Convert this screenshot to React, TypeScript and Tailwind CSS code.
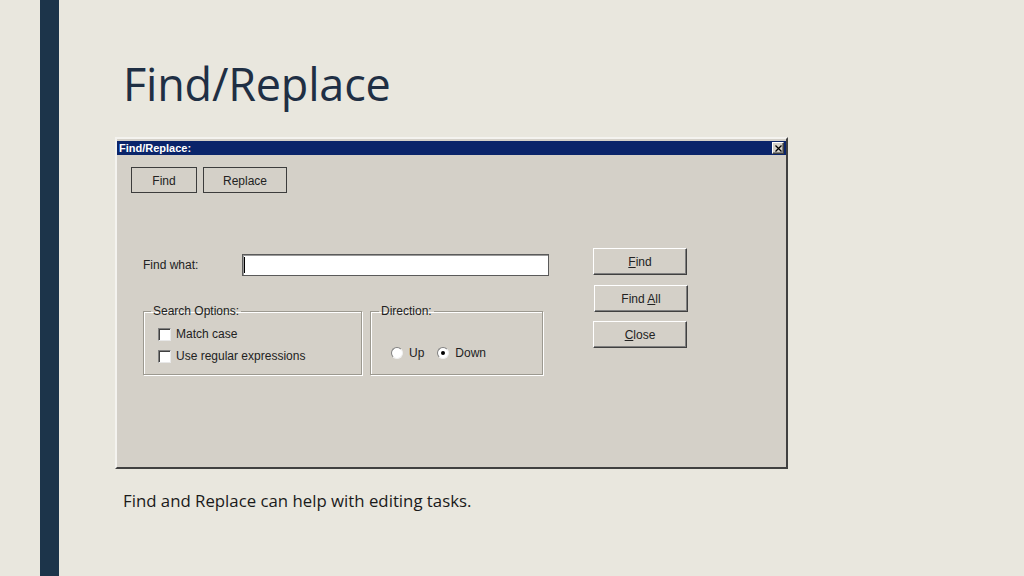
import React from "react";

const raised =
  "border border-t-[#ffffff] border-l-[#ffffff] border-r-[#404040] border-b-[#404040] shadow-[inset_-1px_-1px_0_#808080]";

function SideButton({ children, className = "" }: { children: React.ReactNode; className?: string }) {
  return (
    <div
      className={`w-[94px] h-[27px] bg-[#d4d0c8] ${raised} flex items-center justify-center text-[12px] text-[#222] ${className}`}
    >
      {children}
    </div>
  );
}

function Checkbox({ label, className = "" }: { label: string; className?: string }) {
  return (
    <div className={`flex items-center ${className}`}>
      <div className="w-[13px] h-[13px] bg-white border border-t-[#808080] border-l-[#808080] border-r-[#e8e8e8] border-b-[#e8e8e8] shadow-[inset_1px_1px_0_#404040]" />
      <span className="ml-[5px] text-[12px] text-[#222]">{label}</span>
    </div>
  );
}

function Radio({ checked }: { checked?: boolean }) {
  return (
    <div className="w-[12px] h-[12px] rounded-full bg-white border border-t-[#808080] border-l-[#808080] border-r-[#f0f0f0] border-b-[#f0f0f0] flex items-center justify-center">
      {checked && <div className="w-[4px] h-[4px] rounded-full bg-black" />}
    </div>
  );
}

export default function App() {
  return (
    <div
      className="w-[1024px] h-[576px] bg-[#e9e7de] flex overflow-hidden"
      style={{ fontFamily: '"Liberation Sans", Arial, sans-serif' }}
    >
      <div className="w-[40px] shrink-0" />
      <div className="w-[19px] shrink-0 bg-[#1c344a]" />
      <div className="flex flex-col pl-[56px]">
        <h1
          className="ml-[8px] mt-[60px] text-[45px] leading-[48px] text-[#1f2f44] font-normal tracking-[-0.2px]"
          style={{ fontFamily: '"Open Sans", "Noto Sans", sans-serif' }}
        >
          Find/Replace
        </h1>

        {/* Dialog */}
        <div className="mt-[29px] w-[673px] h-[332px] bg-[#d4d0c8] border-2 border-t-[#f4f3ef] border-l-[#f4f3ef] border-r-[#404040] border-b-[#404040] flex flex-col">
          <div className="h-[14px] mt-[2px] bg-[#0a246a] flex items-center justify-between pl-[2px] pr-[2px]">
            <span className="text-[11px] font-bold text-white leading-none">Find/Replace:</span>
            <div className={`w-[12px] h-[12px] bg-[#d4d0c8] ${raised} flex items-center justify-center`}>
              <svg width="7" height="7" viewBox="0 0 7 7">
                <path d="M0.5 0.5 L6.5 6.5 M6.5 0.5 L0.5 6.5" stroke="#000" strokeWidth="1.3" />
              </svg>
            </div>
          </div>

          <div className="flex mt-[12px] ml-[14px] gap-[6px]">
            <div className="w-[66px] h-[26px] border border-[#3c3c3c] bg-[#d4d0c8] flex items-center justify-center text-[12px] text-[#222] pt-[1px]">
              Find
            </div>
            <div className="w-[84px] h-[26px] border border-[#3c3c3c] bg-[#d4d0c8] flex items-center justify-center text-[12px] text-[#222] pt-[1px]">
              Replace
            </div>
          </div>

          <div className="flex mt-[55px] ml-[26px]">
            <div className="w-[406px] flex flex-col">
              <div className="flex items-center mt-[6px]">
                <span className="w-[99px] text-[12px] text-[#222]">Find what:</span>
                <div className="w-[307px] h-[22px] bg-white border border-[#5a5a5a] shadow-[inset_1px_1px_0_#9a9a9a] flex items-center pl-[1px]">
                  <div className="w-[1px] h-[16px] bg-black" />
                </div>
              </div>

              <div className="flex mt-[28px] gap-[8px]">
                <fieldset className="w-[219px] h-[71px] border border-[#9c9990] shadow-[1px_1px_0_#ffffff,inset_1px_1px_0_#ffffff] pl-[14px]">
                  <legend className="ml-[-7px] px-[2px] text-[12px] text-[#222] leading-[14px]">Search Options:</legend>
                  <Checkbox label="Match case" className="mt-[7px]" />
                  <Checkbox label="Use regular expressions" className="mt-[4px]" />
                </fieldset>
                <fieldset className="w-[173px] h-[71px] border border-[#9c9990] shadow-[1px_1px_0_#ffffff,inset_1px_1px_0_#ffffff] pl-[20px]">
                  <legend className="ml-[-12px] px-[2px] text-[12px] text-[#222] leading-[14px]">Direction:</legend>
                  <div className="flex items-center mt-[26px]">
                    <Radio />
                    <span className="ml-[6px] text-[12px] text-[#222]">Up</span>
                    <div className="ml-[13px]">
                      <Radio checked />
                    </div>
                    <span className="ml-[6px] text-[12px] text-[#222]">Down</span>
                  </div>
                </fieldset>
              </div>
            </div>

            <div className="ml-[44px] flex flex-col">
              <SideButton>
                <span>
                  <span className="underline">F</span>ind
                </span>
              </SideButton>
              <SideButton className="mt-[10px] ml-[1px] h-[26px]">
                <span>
                  Find <span className="underline">A</span>ll
                </span>
              </SideButton>
              <SideButton className="mt-[9px]">
                <span>
                  <span className="underline">C</span>lose
                </span>
              </SideButton>
            </div>
          </div>
        </div>

        <p
          className="ml-[8px] mt-[19px] text-[16.8px] text-[#1a1a1a]"
          style={{ fontFamily: '"Open Sans", "Noto Sans", sans-serif' }}
        >
          Find and Replace can help with editing tasks.
        </p>
      </div>
    </div>
  );
}
